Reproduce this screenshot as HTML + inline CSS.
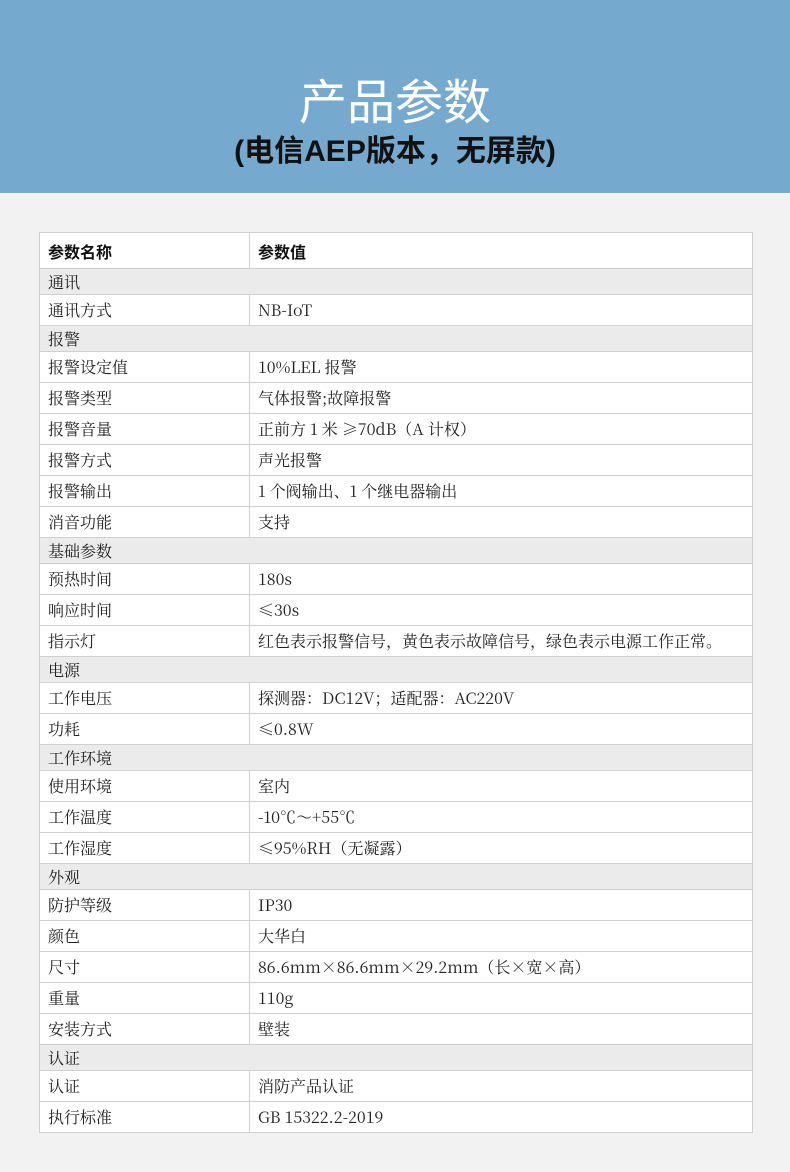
<!DOCTYPE html><html><head><meta charset="utf-8"><style>
body{margin:0;width:790px;height:1172px;background:#f2f2f2;overflow:hidden;font-family:"Noto Serif CJK SC",serif;}
.hd{position:absolute;left:0;top:0;width:790px;height:193px;background:#75a9cd;}
.t1{position:absolute;top:68px;left:0;width:790px;text-align:center;color:#fff;font:48px/60px "Noto Sans CJK SC",sans-serif;}
.t2{position:absolute;top:130px;left:0;width:790px;text-align:center;color:#111;font:bold 30px/44px "Liberation Sans","Noto Sans CJK SC",sans-serif;}
table{position:absolute;left:39px;top:232px;width:714px;border-collapse:collapse;background:#fff;}
td{border:1px solid #cfcfcf;padding:0 0 0 8px;font-size:16px;line-height:20px;color:#222;height:30px;}
td.a{width:201px}
tr.s td{background:#ebebeb;height:25px}
tr.h td{height:35px;font:bold 16px "Noto Sans CJK SC",sans-serif;color:#111}
</style></head><body>
<div class="hd"><div class="t1">产品参数</div><div class="t2">(电信AEP版本，无屏款)</div></div>
<table>
<tr class="h"><td class="a">参数名称</td><td>参数值</td></tr>
<tr class="s"><td colspan="2">通讯</td></tr>
<tr><td class="a">通讯方式</td><td>NB-IoT</td></tr>
<tr class="s"><td colspan="2">报警</td></tr>
<tr><td class="a">报警设定值</td><td>10%LEL 报警</td></tr>
<tr><td class="a">报警类型</td><td>气体报警;故障报警</td></tr>
<tr><td class="a">报警音量</td><td>正前方 1 米 ≥70dB（A 计权）</td></tr>
<tr><td class="a">报警方式</td><td>声光报警</td></tr>
<tr><td class="a">报警输出</td><td>1 个阀输出、1 个继电器输出</td></tr>
<tr><td class="a">消音功能</td><td>支持</td></tr>
<tr class="s"><td colspan="2">基础参数</td></tr>
<tr><td class="a">预热时间</td><td>180s</td></tr>
<tr><td class="a">响应时间</td><td>≤30s</td></tr>
<tr><td class="a">指示灯</td><td>红色表示报警信号，黄色表示故障信号，绿色表示电源工作正常。</td></tr>
<tr class="s"><td colspan="2">电源</td></tr>
<tr><td class="a">工作电压</td><td>探测器：DC12V；适配器：AC220V</td></tr>
<tr><td class="a">功耗</td><td>≤0.8W</td></tr>
<tr class="s"><td colspan="2">工作环境</td></tr>
<tr><td class="a">使用环境</td><td>室内</td></tr>
<tr><td class="a">工作温度</td><td>-10℃～+55℃</td></tr>
<tr><td class="a">工作湿度</td><td>≤95%RH（无凝露）</td></tr>
<tr class="s"><td colspan="2">外观</td></tr>
<tr><td class="a">防护等级</td><td>IP30</td></tr>
<tr><td class="a">颜色</td><td>大华白</td></tr>
<tr><td class="a">尺寸</td><td>86.6mm×86.6mm×29.2mm（长×宽×高）</td></tr>
<tr><td class="a">重量</td><td>110g</td></tr>
<tr><td class="a">安装方式</td><td>壁装</td></tr>
<tr class="s"><td colspan="2">认证</td></tr>
<tr><td class="a">认证</td><td>消防产品认证</td></tr>
<tr><td class="a">执行标准</td><td>GB 15322.2-2019</td></tr>
</table>
</body></html>
